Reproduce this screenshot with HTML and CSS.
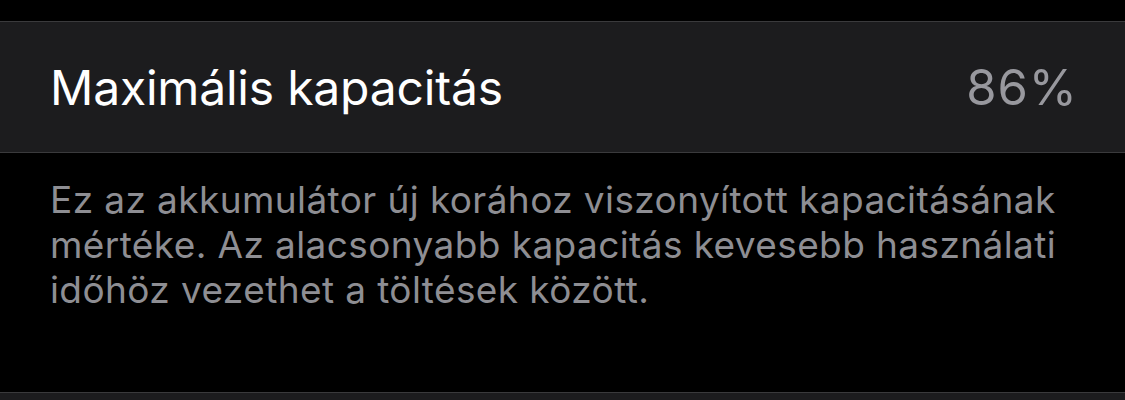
FILE: index.html
```html
<!DOCTYPE html>
<html lang="hu">
<head>
  <meta charset="UTF-8">
  <title>Akkumulátor állapota</title>
  <link rel="stylesheet" href="styles.css">
</head>
<body>
  <div class="group">
    <div class="cell">
      <span class="label">Maximális kapacitás</span>
      <span class="value">86%</span>
    </div>
  </div>
  <p class="footer">Ez az akkumulátor új korához viszonyított kapacitásának mértéke. Az alacsonyabb kapacitás kevesebb használati időhöz vezethet a töltések között.</p>
  <div class="group">
    <div class="cell"></div>
  </div>
</body>
</html>
```

FILE: styles.css
```css
body {
  font-family: Inter, "Noto Sans", sans-serif;
  margin: 0;
  padding-top: 21px;
  background-color: #000;
  color: #fff;
}
.group {
  border-top: 1px solid #3a3a3c;
  border-bottom: 1px solid #3a3a3c;
  background-color: #1c1c1e;
}
.cell {
  height: 130px;
  padding: 0 50px;
  display: flex;
  align-items: center;
  justify-content: space-between;
}
.label {
  font-size: 48px;
  letter-spacing: -0.2px;
}
.value {
  font-size: 49px;
  letter-spacing: 1px;
  margin-right: -3px;
  color: #98989e;
}
.footer {
  margin: 0;
  padding: 24px 50px 0;
  height: 239px;
  box-sizing: border-box;
  font-size: 37px;
  letter-spacing: 0.4px;
  line-height: 45px;
  color: #8e8e93;
}
```
